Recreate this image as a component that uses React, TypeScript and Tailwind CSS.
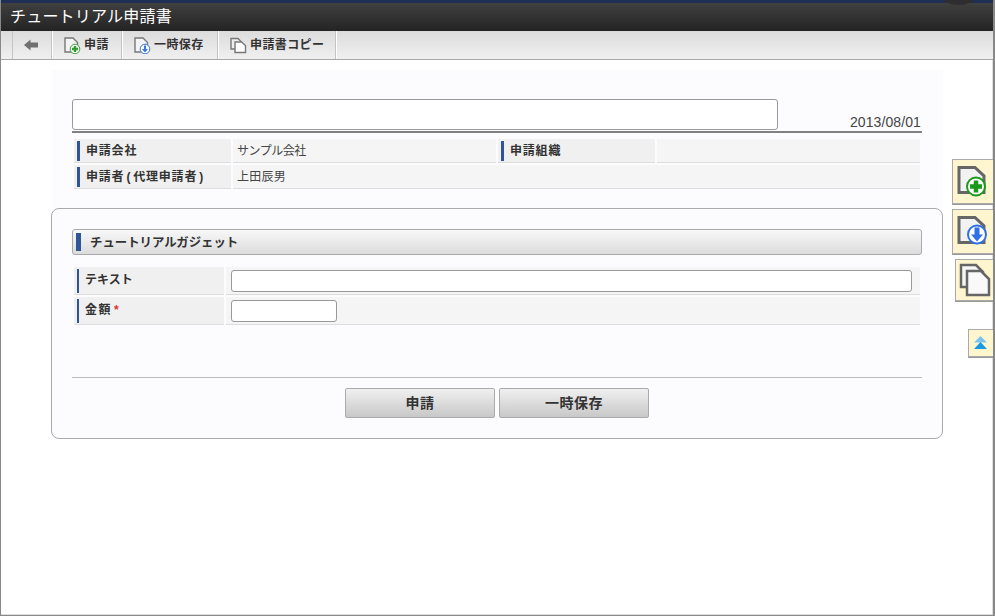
// App.tsx
const font = "font-['Liberation_Sans','Noto_Sans_CJK_JP',sans-serif]";

const DocIcon = ({ kind }: { kind: "add" | "save" }) => (
  <svg width="17" height="17" viewBox="0 0 17 17">
    <path d="M1 1H9L13.5 5.5V15H1Z" fill="#f4f4f4" stroke="#777" strokeWidth="1.4" />
    <circle cx="11" cy="12" r="4.8" fill="#fff" stroke={kind === "add" ? "#3aa63a" : "#3a78e0"} strokeWidth="1" />
    {kind === "add" ? (
      <path d="M8 12H14M11 9V15" stroke="#2e9e2e" strokeWidth="2.4" />
    ) : (
      <path d="M10 8.5H12V12H14L11 15.5L8 12H10Z" fill="#3a78e0" />
    )}
  </svg>
);

const CopyIcon = () => (
  <svg width="17" height="17" viewBox="0 0 17 17">
    <path d="M1 1.5H8L11 4.5V12H1Z" fill="#eee" stroke="#777" strokeWidth="1.4" />
    <path d="M5 5H11.5L15.5 8.5V15.5H5Z" fill="#fff" stroke="#777" strokeWidth="1.4" />
  </svg>
);

const ToolButton = ({ icon, label, w }: { icon: React.ReactNode; label: string; w: string }) => (
  <div className={`flex h-full shrink-0 items-center gap-[3px] border-r border-[#c4c4c4] pl-[11px] shadow-[1px_0_0_#fff] ${w}`}>
    {icon}
    <span className="text-[12px] font-bold tracking-[0.4px] text-[#333]">{label}</span>
  </div>
);

const InfoLabel = ({ children, w }: { children: React.ReactNode; w: string }) => (
  <div className={`flex h-[24px] shrink-0 items-center border-b border-[#ddd] bg-[#f0f0f0] pl-[3px] ${w}`}>
    <div className="h-[20px] w-[3px] bg-[#2f5597]" />
    <span className="ml-[6px] text-[12px] font-bold tracking-[0.8px] text-[#333]">{children}</span>
  </div>
);

const SideButton = ({ children, className }: { children: React.ReactNode; className: string }) => (
  <div className={`absolute right-0 flex items-center justify-center border border-r-0 border-[#aaa] bg-[#fff6d0] shadow-[0_1px_0_#999] ${className}`}>
    {children}
  </div>
);

export default function App() {
  return (
    <div className={`relative flex h-[616px] w-[995px] flex-col overflow-hidden border-b border-l border-r-2 border-[#888] bg-white shadow-[inset_-1px_-1px_0_#ddd] ${font}`}>
      <div className="h-[3px] shrink-0 bg-[#1f2f55]" />
      <div className="absolute left-[942px] top-[-8px] h-[13px] w-[31px] rounded-[50%] bg-[#2e2e2e]" />
      <div className="flex h-[28px] shrink-0 items-center bg-gradient-to-b from-[#404040] to-[#242424] pl-[9px]">
        <span className="text-[16px] tracking-[0.2px] text-white">チュートリアル申請書</span>
      </div>
      <div className="flex h-[29px] shrink-0 items-stretch border-b border-[#a8a8a8] bg-gradient-to-b from-[#dcdcdc] to-[#f0f0f0] pl-[11px]">
        <div className="mr-px flex h-full w-[40px] shrink-0 items-center justify-center border-x border-[#c4c4c4] pr-[3px] shadow-[1px_0_0_#fff]">
          <svg width="14" height="12" viewBox="0 0 14 12">
            <path d="M0 6L6.5 0.5V3.5H14V8.5H6.5V11.5Z" fill="#707070" />
          </svg>
        </div>
        <div className="mr-px"><ToolButton icon={<DocIcon kind="add" />} label="申請" w="w-[69px]" /></div>
        <div className="mr-px"><ToolButton icon={<DocIcon kind="save" />} label="一時保存" w="w-[95px]" /></div>
        <ToolButton icon={<CopyIcon />} label="申請書コピー" w="w-[117px]" />
      </div>

      <div className="ml-[50px] mt-[10px] w-[892px] bg-[#fcfcff]">
        <div className="px-[21px] pt-[29px]">
          <div className="flex items-end justify-between border-b-2 border-[#808080]">
            <div className="mb-px h-[31px] w-[706px] rounded-[3px] border border-[#999] bg-white" />
            <span className="mr-px text-[14px] leading-[17px] tracking-[0.1px] text-[#444]">2013/08/01</span>
          </div>
          <div className="mt-[6px] flex gap-[2px] px-[2px]">
            <InfoLabel w="w-[157px]">申請会社</InfoLabel>
            <div className="flex h-[24px] w-[263px] items-center border-b border-[#ddd] bg-[#f5f5f5] pl-[4px] text-[12px] tracking-[-0.5px] text-[#444]">サンプル会社</div>
            <InfoLabel w="w-[157px]">申請組織</InfoLabel>
            <div className="h-[24px] flex-1 border-b border-[#ddd] bg-[#f5f5f5]" />
          </div>
          <div className="mt-[2px] flex gap-[2px] px-[2px]">
            <InfoLabel w="w-[157px]">申請者<span className="mx-[2px]">(</span>代理申請者<span className="mx-[2px]">)</span></InfoLabel>
            <div className="flex h-[24px] flex-1 items-center border-b border-[#ddd] bg-[#f5f5f5] pl-[4px] text-[12px] tracking-[0.25px] text-[#444]">上田辰男</div>
          </div>
        </div>

        <div className="mt-[19px] h-[231px] rounded-[8px] border border-[#aaa] px-[20px] pt-[20px]">
          <div className="flex h-[26px] items-center rounded-[3px] border border-[#aaa] bg-gradient-to-b from-[#f8f8f8] to-[#dcdcdc] pl-[3px]">
            <div className="h-[18px] w-[5px] bg-[#2f5597]" />
            <span className="ml-[9px] pt-[2px] text-[12.4px] font-bold text-[#333]">チュートリアルガジェット</span>
          </div>
          <div className="mt-[12px] flex gap-[2px] px-[2px]">
            <div className="flex h-[28px] w-[150px] shrink-0 items-center border-b border-[#ddd] bg-[#f0f0f0] pl-[3px]">
              <div className="h-[24px] w-[2px] bg-[#2f5597]" />
              <span className="ml-[6px] pb-[2px] text-[12px] font-bold text-[#333]">テキスト</span>
            </div>
            <div className="flex h-[28px] flex-1 items-center border-b border-[#ddd] bg-[#f5f5f5] pl-[5px] pr-[8px]">
              <div className="h-[22px] w-full rounded-[3px] border border-[#999] bg-white" />
            </div>
          </div>
          <div className="mt-[2px] flex gap-[2px] px-[2px]">
            <div className="flex h-[28px] w-[150px] shrink-0 items-center border-b border-[#ddd] bg-[#f0f0f0] pl-[3px]">
              <div className="h-[24px] w-[2px] bg-[#2f5597]" />
              <span className="ml-[6px] pb-[2px] text-[12px] font-bold tracking-[1.5px] text-[#333]">金額<span className="ml-[2px] text-[#e03030]">*</span></span>
            </div>
            <div className="flex h-[28px] flex-1 items-center border-b border-[#ddd] bg-[#f5f5f5] pl-[5px]">
              <div className="h-[22px] w-[106px] rounded-[3px] border border-[#999] bg-white" />
            </div>
          </div>
          <div className="mt-[52px] flex justify-center gap-[4px] border-t border-[#bbb] pt-[10px]">
            <div className="flex h-[30px] w-[150px] items-center justify-center rounded-[2px] border border-[#aaa] bg-gradient-to-b from-[#f0f0f0] to-[#c8c8c8] text-[14px] font-bold tracking-[0.5px] text-[#333]">申請</div>
            <div className="flex h-[30px] w-[150px] items-center justify-center rounded-[2px] border border-[#aaa] bg-gradient-to-b from-[#f0f0f0] to-[#c8c8c8] text-[14px] font-bold tracking-[0.5px] text-[#333]">一時保存</div>
          </div>
        </div>
      </div>

      <SideButton className="top-[159px] h-[45px] w-[41px]">
        <svg width="32" height="32" viewBox="0 0 32 32">
          <path d="M2 1.5H18L27 10V26.5H2Z" fill="#f2f2f2" stroke="#666" strokeWidth="3" />
          <circle cx="19" cy="20.5" r="9" fill="#fff" stroke="#1a9a1a" strokeWidth="2" />
          <path d="M13 20.5H25M19 14.5V26.5" stroke="#1a9a1a" strokeWidth="4.5" />
        </svg>
      </SideButton>
      <SideButton className="top-[209px] h-[45px] w-[41px]">
        <svg width="32" height="32" viewBox="0 0 32 32">
          <path d="M2 1.5H18L27 10V26.5H2Z" fill="#f2f2f2" stroke="#666" strokeWidth="3" />
          <circle cx="20" cy="18.5" r="9" fill="#fff" stroke="#2f6fe8" strokeWidth="2" />
          <path d="M17.5 11.5H22.5V18.5H26L20 25.5L14 18.5H17.5Z" fill="#2f6fe8" />
        </svg>
      </SideButton>
      <SideButton className="top-[259px] h-[42px] w-[38px]">
        <svg width="32" height="34" viewBox="0 0 32 34">
          <path d="M2 2H17L24 9V24H2Z" fill="#f6f6f6" stroke="#666" strokeWidth="2.5" />
          <path d="M8 8H22L30 16V32H8Z" fill="#f9f9f9" stroke="#666" strokeWidth="2.5" />
        </svg>
      </SideButton>
      <SideButton className="top-[329px] h-[28px] w-[25px] pr-[2px]">
        <svg width="13" height="14" viewBox="0 0 13 14">
          <path d="M6.5 0L13 6.5H0Z" fill="#7cc4f0" />
          <path d="M6.5 6L13 13H0Z" fill="#1a9ae0" />
        </svg>
      </SideButton>
    </div>
  );
}
